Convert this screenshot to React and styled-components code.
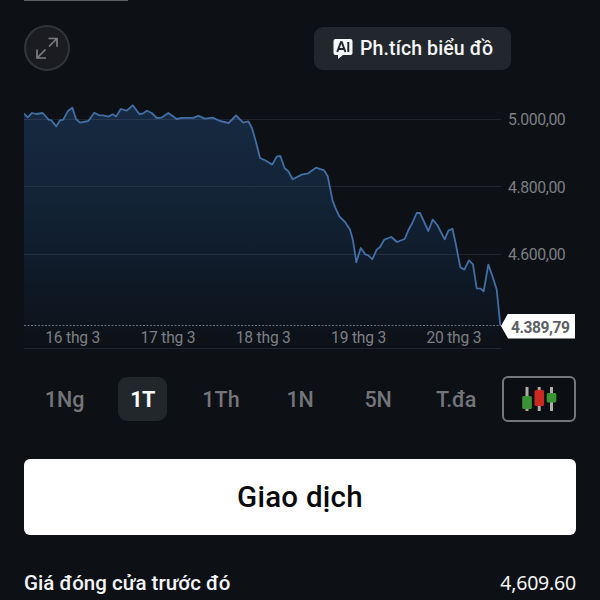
import React from "react";
import styled, { createGlobalStyle } from "styled-components";

const GlobalStyle = createGlobalStyle`
  *, *::before, *::after { box-sizing: border-box; }
  body { margin: 0; background: #0d1015; }
`;

const Screen = styled.main`
  width: 600px;
  height: 600px;
  overflow: hidden;
  display: flex;
  flex-direction: column;
  padding: 0 24px;
  background: #0d1015;
  color: #f4f5f6;
  font-family: Roboto, "Noto Sans", sans-serif;
`;

const TabIndicator = styled.div`
  width: 104px;
  height: 1px;
  flex: none;
  background: #5b5c5f;
`;

const Toolbar = styled.header`
  display: flex;
  justify-content: space-between;
  align-items: center;
  height: 46px;
  margin-top: 24px;
  padding-right: 65px;
  flex: none;
`;

const ExpandButton = styled.button`
  display: grid;
  place-items: center;
  width: 46px;
  height: 46px;
  padding: 0;
  border: 2px solid #323438;
  border-radius: 50%;
  background: #1b1c21;
  color: #7c7d81;
`;

const AnalyseButton = styled.button`
  display: flex;
  align-items: center;
  gap: 7px;
  width: 197px;
  height: 43px;
  margin-top: 1px;
  padding: 0 0 0 19px;
  border: 0;
  border-radius: 9px;
  background: #22272d;
  color: #f5f6f7;
  font: 500 19.5px/43px Roboto, sans-serif;
  letter-spacing: 0.12px;
  white-space: nowrap;
`;

const Chart = styled.section`
  display: grid;
  grid-template-columns: 477px 75px;
  height: 260px;
  margin-top: 19px;
  flex: none;
`;

const Plot = styled.svg`
  grid-area: 1 / 1;
  display: block;
`;

const DateAxis = styled.div`
  grid-area: 1 / 1;
  align-self: end;
  display: grid;
  grid-template-columns: repeat(5, 95.3px);
  height: 24px;
  padding-left: 1px;
  text-align: center;
  color: #7c7f83;
  font-size: 15.6px;
  line-height: 24px;
  letter-spacing: -0.2px;
  z-index: 1;
`;

const PriceAxis = styled.div`
  grid-area: 1 / 2;
  display: flex;
  flex-direction: column;
  padding-top: 18px;
`;

const Price = styled.span`
  height: 67.5px;
  padding-left: 7px;
  color: #7c7f83;
  font-size: 15.8px;
  line-height: 23px;
  letter-spacing: -0.4px;
  white-space: nowrap;
`;

const LastPrice = styled.span`
  width: 74px;
  height: 25px;
  margin-top: 3px;
  padding-left: 10px;
  background: #fff;
  clip-path: polygon(0 50%, 7px 0, 100% 0, 100% 100%, 7px 100%);
  color: #5d5f62;
  font-size: 15.6px;
  font-weight: 700;
  line-height: 28px;
  letter-spacing: -0.45px;
`;

const Ranges = styled.nav`
  display: flex;
  align-items: center;
  height: 46px;
  margin-top: 26px;
  flex: none;
`;

const Range = styled.button`
  width: ${(p) => p.$width}px;
  height: 44px;
  margin-right: ${(p) => p.$gap}px;
  padding: 0;
  border: 0;
  border-radius: 9px;
  background: ${(p) => (p.$active ? "#22272c" : "transparent")};
  color: ${(p) => (p.$active ? "#f8f9fa" : "#74757b")};
  font: ${(p) => (p.$active ? 700 : 500)} 21.5px/45px Roboto, sans-serif;
  letter-spacing: ${(p) => p.$tracking || 0}px;
  white-space: nowrap;
`;

const ChartTypeButton = styled.button`
  display: grid;
  place-items: center;
  width: 74px;
  height: 46px;
  margin-left: auto;
  padding: 0;
  border: 2px solid #76777d;
  border-radius: 6px;
  background: #0b0f14;
`;

const TradeButton = styled.button`
  width: 552px;
  height: 76px;
  margin-top: 37px;
  padding: 0;
  flex: none;
  border: 0;
  border-radius: 6px;
  background: #fff;
  color: #090a0c;
  font: 500 29.5px/77px Roboto, sans-serif;
  letter-spacing: 0.25px;
`;

const Statistic = styled.div`
  display: flex;
  justify-content: space-between;
  height: 30px;
  margin-top: 33px;
  flex: none;
  line-height: 30px;
  white-space: nowrap;
`;

const StatLabel = styled.span`
  font-size: 20.5px;
  font-weight: 500;
  letter-spacing: 0.04px;
`;

const StatValue = styled.span`
  font: 400 19.5px/30px "Noto Sans", sans-serif;
  letter-spacing: -0.2px;
`;

/* Series in screen units: the plot starts 24px from the left and 90px from the top. */
const series = [
  [24, 113.3], [27.7, 117], [32, 112.7], [36, 113.7], [42.7, 112.7], [48.7, 119.3],
  [51.3, 120], [56.3, 126], [60, 120], [63.3, 119.3], [67.7, 111], [72.3, 107.3],
  [76, 118.7], [80, 122.3], [88.3, 120.7], [94.3, 112.5], [99.3, 115], [103.3, 115],
  [108.3, 116.3], [112.7, 114], [116, 116.3], [120.7, 108.7], [126.7, 110.3],
  [132.7, 105], [139.3, 113.7], [143.3, 113], [147, 110.5], [151.7, 112.7],
  [156.7, 117.7], [161.7, 117.3], [168.3, 112.7], [176.7, 118.7], [182, 117.5],
  [193.3, 117.5], [198.3, 115.5], [205, 118.3], [212.7, 117.3], [220, 120.7],
  [228.7, 122.7], [236, 115.2], [243.3, 122.3], [248.3, 121], [252, 127.7],
  [256, 141.7], [260, 157.7], [265, 160], [272.3, 164.3], [276.7, 156.3],
  [280.3, 155.7], [284.7, 168], [288.3, 171], [292.7, 179], [301.7, 174.3],
  [308.3, 173], [316, 167.3], [324, 170], [327.7, 176], [332.5, 200],
  [335.3, 207.3], [339.3, 216], [345, 221.7], [350, 229.3], [353, 240],
  [356.3, 262], [360.7, 247.7], [365.3, 254], [368.3, 255], [372.3, 259],
  [376.7, 249.3], [380, 246.7], [384.3, 239.3], [391.3, 236.7], [397, 241.7],
  [404.7, 238.7], [408.3, 230], [412.3, 222.7], [416.7, 212.7], [420, 212.7],
  [428.3, 230.7], [432.7, 219.3], [437.3, 224.7], [444.7, 239], [448.5, 230],
  [452.5, 228.5], [455.7, 243.3], [460.3, 267], [464.3, 269.3], [469, 260],
  [473, 264], [476.7, 288], [480.7, 288.3], [483.7, 291], [488.3, 264.3],
  [492.7, 276.7], [496.7, 289.3], [500.3, 325],
];
const linePath = "M" + series.map(([x, y]) => `${(x - 24).toFixed(1)} ${(y - 89.7).toFixed(1)}`).join("L");

const ranges = [
  { label: "1Ng", width: 81, gap: 13, tracking: 0 },
  { label: "1T", width: 49, gap: 14, active: true, tracking: -0.5 },
  { label: "1Th", width: 80, gap: 0, tracking: 0 },
  { label: "1N", width: 78, gap: 0, tracking: -0.3 },
  { label: "5N", width: 78, gap: 0, tracking: -0.3 },
  { label: "T.đa", width: 78, gap: 0, tracking: -0.4 },
];

function ExpandIcon() {
  return (
    <svg width="24" height="24" viewBox="0 0 24 24" fill="none" stroke="currentColor" strokeWidth="1.7">
      <path d="M14 10.5 22 2.5M13.5 2.5H22v8.3M10.5 13.5 2 22M2 13.5V22h9" />
    </svg>
  );
}

function AiIcon() {
  return (
    <svg width="20" height="20" viewBox="0 0 20 20">
      <path fill="#f5f6f7" d="M2.5 0h15a2 2 0 0 1 2 2v12a2 2 0 0 1-2 2H10l-5 4v-4H2.5a2 2 0 0 1-2-2V2a2 2 0 0 1 2-2Z" />
      <path fill="none" stroke="#22272d" strokeWidth="2" d="m4.2 13 3.7-9.8h.9l3.6 9.8M5.7 10.1h5.2M15.3 3v10" />
    </svg>
  );
}

function CandleIcon() {
  return (
    <svg width="36" height="26" viewBox="0 0 36 26">
      <path stroke="#b0aca6" strokeWidth="3" d="M6 1v24M18.2 1v24M30.5 1v24" />
      <rect x="1.2" y="10" width="9.6" height="13" rx="1.5" fill="#3b9434" />
      <rect x="13.5" y="4" width="9.6" height="16" rx="1.5" fill="#c92b22" />
      <rect x="25.7" y="7" width="9.6" height="9.5" rx="1.5" fill="#3b9434" />
    </svg>
  );
}

export default function App() {
  return (
    <>
      <GlobalStyle />
      <Screen>
        <TabIndicator />
        <Toolbar>
          <ExpandButton aria-label="Mở rộng"><ExpandIcon /></ExpandButton>
          <AnalyseButton><AiIcon />Ph.tích biểu đồ</AnalyseButton>
        </Toolbar>
        <Chart>
          <Plot width="477" height="260" viewBox="0 0 477 260">
            <defs>
              <linearGradient id="area" gradientUnits="userSpaceOnUse" x1="0" y1="15" x2="0" y2="258">
                <stop offset="0" stopColor="#172a42" />
                <stop offset="0.4" stopColor="#122335" />
                <stop offset="0.75" stopColor="#0e1825" />
                <stop offset="1" stopColor="#0d1117" />
              </linearGradient>
            </defs>
            <path d={`${linePath}V258H0Z`} fill="url(#area)" />
            <path d="M0 29.5H477M0 96.5H477M0 164.5H477M0 258.5H477" stroke="#93a4b5" strokeOpacity="0.14" />
            <path d="M0 235.5H477" stroke="#66717b" strokeDasharray="2 1.5" />
            <path d={linePath} fill="none" stroke="#426fa6" strokeWidth="1.8" strokeLinejoin="round" />
          </Plot>
          <DateAxis>
            {["16 thg 3", "17 thg 3", "18 thg 3", "19 thg 3", "20 thg 3"].map((d) => <span key={d}>{d}</span>)}
          </DateAxis>
          <PriceAxis>
            <Price>5.000,00</Price>
            <Price>4.800,00</Price>
            <Price>4.600,00</Price>
            <LastPrice>4.389,79</LastPrice>
          </PriceAxis>
        </Chart>
        <Ranges>
          {ranges.map((r) => (
            <Range key={r.label} $width={r.width} $gap={r.gap} $active={r.active} $tracking={r.tracking}>
              {r.label}
            </Range>
          ))}
          <ChartTypeButton aria-label="Biểu đồ nến"><CandleIcon /></ChartTypeButton>
        </Ranges>
        <TradeButton>Giao dịch</TradeButton>
        <Statistic>
          <StatLabel>Giá đóng cửa trước đó</StatLabel>
          <StatValue>4,609.60</StatValue>
        </Statistic>
      </Screen>
    </>
  );
}
